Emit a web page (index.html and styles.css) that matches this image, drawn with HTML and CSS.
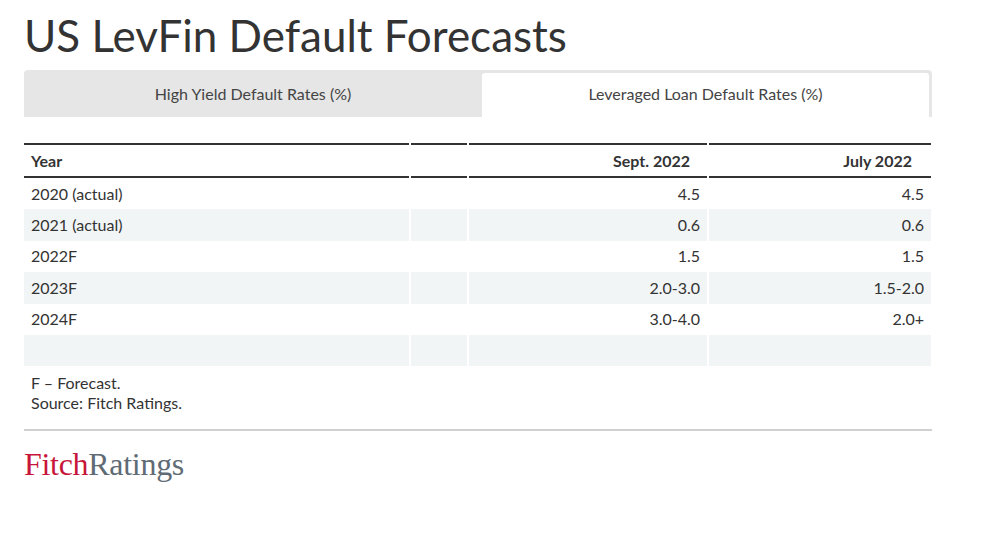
FILE: index.html
```html
<!DOCTYPE html>
<html lang="en">
<head>
<meta charset="utf-8">
<title>US LevFin Default Forecasts</title>
<link rel="stylesheet" href="styles.css">
</head>
<body>
<div class="page">
  <h1 class="title">US LevFin Default Forecasts</h1>
  <div class="tabs">
    <div class="tab tab-first">High Yield Default Rates (%)</div>
    <div class="tab tab-active">Leveraged Loan Default Rates (%)</div>
  </div>
  <table class="data">
    <colgroup>
      <col class="c1"><col class="c2"><col class="c3"><col class="c4">
    </colgroup>
    <thead>
      <tr><th class="left">Year</th><th></th><th class="num">Sept. 2022</th><th class="num">July 2022</th></tr>
    </thead>
    <tbody>
      <tr><td>2020 (actual)</td><td></td><td class="num">4.5</td><td class="num">4.5</td></tr>
      <tr><td>2021 (actual)</td><td></td><td class="num">0.6</td><td class="num">0.6</td></tr>
      <tr><td>2022F</td><td></td><td class="num">1.5</td><td class="num">1.5</td></tr>
      <tr><td>2023F</td><td></td><td class="num">2.0-3.0</td><td class="num">1.5-2.0</td></tr>
      <tr><td>2024F</td><td></td><td class="num">3.0-4.0</td><td class="num">2.0+</td></tr>
      <tr><td>&nbsp;</td><td></td><td></td><td></td></tr>
    </tbody>
  </table>
  <div class="notes">
    <div>F – Forecast.</div>
    <div>Source: Fitch Ratings.</div>
  </div>
  <hr class="rule">
  <div class="logo"><span class="logo-fitch">Fitch</span><span class="logo-ratings">Ratings</span></div>
</div>
</body>
</html>
```
FILE: styles.css
```css
html, body {
  margin: 0;
  padding: 0;
  background: #fff;
}
body {
  font-family: Lato, "Open Sans", "Liberation Sans", sans-serif;
  color: #333;
}
.page {
  width: 908px;
  margin-left: 24px;
}
.title {
  margin: 10px 0 0;
  font-size: 44px;
  line-height: 50px;
  font-weight: 400;
  color: #333;
}
.tabs {
  margin-top: 10px;
  display: flex;
  background: #e6e6e6;
  height: 47px;
  border-radius: 4px 4px 0 0;
  padding: 3px 3px 0 0;
  box-sizing: border-box;
}
.tab {
  display: flex;
  align-items: center;
  justify-content: center;
  font-size: 16px;
  color: #444;
}
.tab-first {
  width: 458px;
  flex: none;
  padding-bottom: 3px;
}
.tab-active {
  flex: 1;
  background: #fff;
  border-radius: 3px 3px 0 0;
  padding-bottom: 4px;
}
.data {
  margin: 26px -2px 0;
  width: 911px;
  border-collapse: separate;
  border-spacing: 2px 0;
  font-size: 16px;
  table-layout: fixed;
}
.c1 { width: 385px; }
.c2 { width: 56px; }
.c3 { width: 238px; }
.c4 { width: 222px; }
.data th {
  font-weight: 700;
  border-top: 2px solid #333;
  border-bottom: 2px solid #333;
  height: 35px;
  padding: 0 17px 0 7px;
  box-sizing: border-box;
  line-height: 20px;
  color: #333;
}
.data th.left { text-align: left; }
.data th.num:last-child { padding-right: 19px; }
.data td {
  padding: 0 7px;
  height: 31.4px;
  line-height: 20px;
  color: #333;
}
.data .num { text-align: right; }
.data tbody tr:nth-child(even) td {
  background: #f2f5f6;
}
.notes {
  margin-top: 7px;
  padding-left: 7px;
  font-size: 16px;
  line-height: 20px;
  color: #333;
}
.rule {
  margin: 16px 0 0;
  border: 0;
  height: 2px;
  background: #d0d0d0;
}
.logo {
  margin-top: 15px;
  font-family: "Liberation Serif", "DejaVu Serif", serif;
  font-size: 32px;
  line-height: 36px;
  letter-spacing: -0.3px;
}
.logo-fitch { color: #c8163b; }
.logo-ratings { color: #5f6b75; }
```
